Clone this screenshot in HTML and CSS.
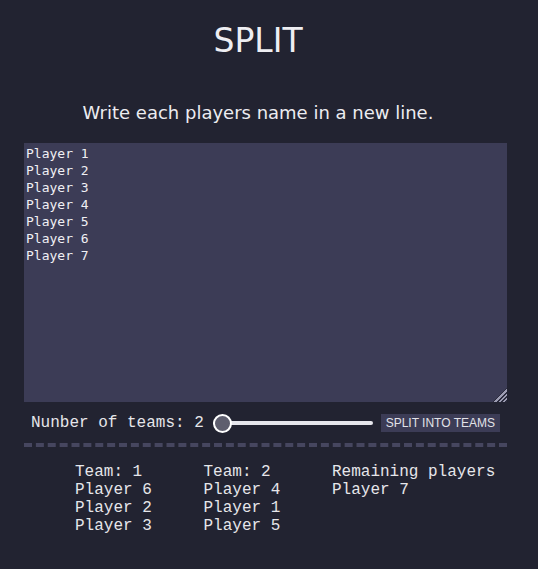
FILE: index.html
```
<!DOCTYPE html>
<html>
<head>
<meta charset="utf-8">
<link rel="stylesheet" href="styles.css">
</head>
<body>
<div class="app">
  <h1 class="title">SPLIT</h1>
  <p class="hint">Write each players name in a new line.</p>
  <textarea class="names" spellcheck="false">Player 1
Player 2
Player 3
Player 4
Player 5
Player 6
Player 7</textarea>
  <div class="controls">
    <label class="count-label" for="teams">Nunber of teams: 2</label>
    <input class="slider" id="teams" type="range" min="2" max="7" value="2">
    <button class="split-btn">SPLIT INTO TEAMS</button>
  </div>
  <div class="divider"></div>
  <div class="results">
    <div class="team">
      <div>Team: 1</div>
      <div>Player 6</div>
      <div>Player 2</div>
      <div>Player 3</div>
    </div>
    <div class="team">
      <div>Team: 2</div>
      <div>Player 4</div>
      <div>Player 1</div>
      <div>Player 5</div>
    </div>
    <div class="team">
      <div>Remaining players</div>
      <div>Player 7</div>
    </div>
  </div>
</div>
</body>
</html>
```
FILE: styles.css
```
html, body {
  margin: 0;
  padding: 0;
  background: #222331;
  height: 100%;
}
body {
  color: #e8e8ec;
  font-family: "DejaVu Sans", Verdana, sans-serif;
}
.app {
  padding: 21px 31px 0 24px;
}
.title {
  margin: 0 -9px 0 -24px;
  font-weight: normal;
  font-size: 33px;
  line-height: 40px;
  text-align: center;
  color: #eeeef2;
}
.hint {
  margin: 41px -9px 0 -24px;
  font-size: 18px;
  line-height: 22px;
  text-align: center;
  color: #ececf0;
}
.names {
  display: block;
  box-sizing: border-box;
  width: 483px;
  height: 259px;
  margin: 19px 0 0 0;
  padding: 2px 2px;
  border: none;
  outline: none;
  background: #3c3c56;
  color: #f0f0f4;
  font-family: "DejaVu Sans Mono", monospace;
  font-size: 13px;
  line-height: 17px;
}
.names::-webkit-resizer {
  background:
    linear-gradient(135deg, #3c3c56 50%, transparent 50%),
    repeating-linear-gradient(135deg, #9c9cb2 0 1.5px, #2c2c3e 1.5px 3px);
}
.controls {
  display: flex;
  align-items: center;
  height: 26px;
  margin-top: 8px;
  padding-left: 7px;
}
.count-label {
  font-family: "Liberation Mono", "Courier New", monospace;
  font-size: 16px;
  line-height: 18px;
  color: #e6e6ea;
}
.slider {
  -webkit-appearance: none;
  appearance: none;
  width: 160px;
  height: 20px;
  margin: 0 0 0 9px;
  padding: 0;
  background: transparent;
}
.slider::-webkit-slider-runnable-track {
  height: 4px;
  border-radius: 2px;
  background: #e6e6ec;
}
.slider::-webkit-slider-thumb {
  -webkit-appearance: none;
  appearance: none;
  box-sizing: border-box;
  width: 19px;
  height: 19px;
  margin-top: -7.5px;
  border-radius: 50%;
  border: 2px solid #ffffff;
  background: #5e5e6e;
}
.split-btn {
  margin-left: 8px;
  height: 18px;
  width: 119px;
  padding: 0;
  border: none;
  background: #3c3c56;
  color: #e2e2e8;
  font-family: "Liberation Sans", Arial, sans-serif;
  font-size: 12px;
  line-height: 18px;
}
.divider {
  margin-top: 7px;
  width: 483px;
  border-top: 4px dashed #46465f;
}
.results {
  display: grid;
  grid-template-columns: 128.5px 128.5px auto;
  padding: 16px 0 0 51px;
  font-family: "Liberation Mono", "Courier New", monospace;
  font-size: 16px;
  line-height: 18px;
  color: #e6e6ea;
}
```
